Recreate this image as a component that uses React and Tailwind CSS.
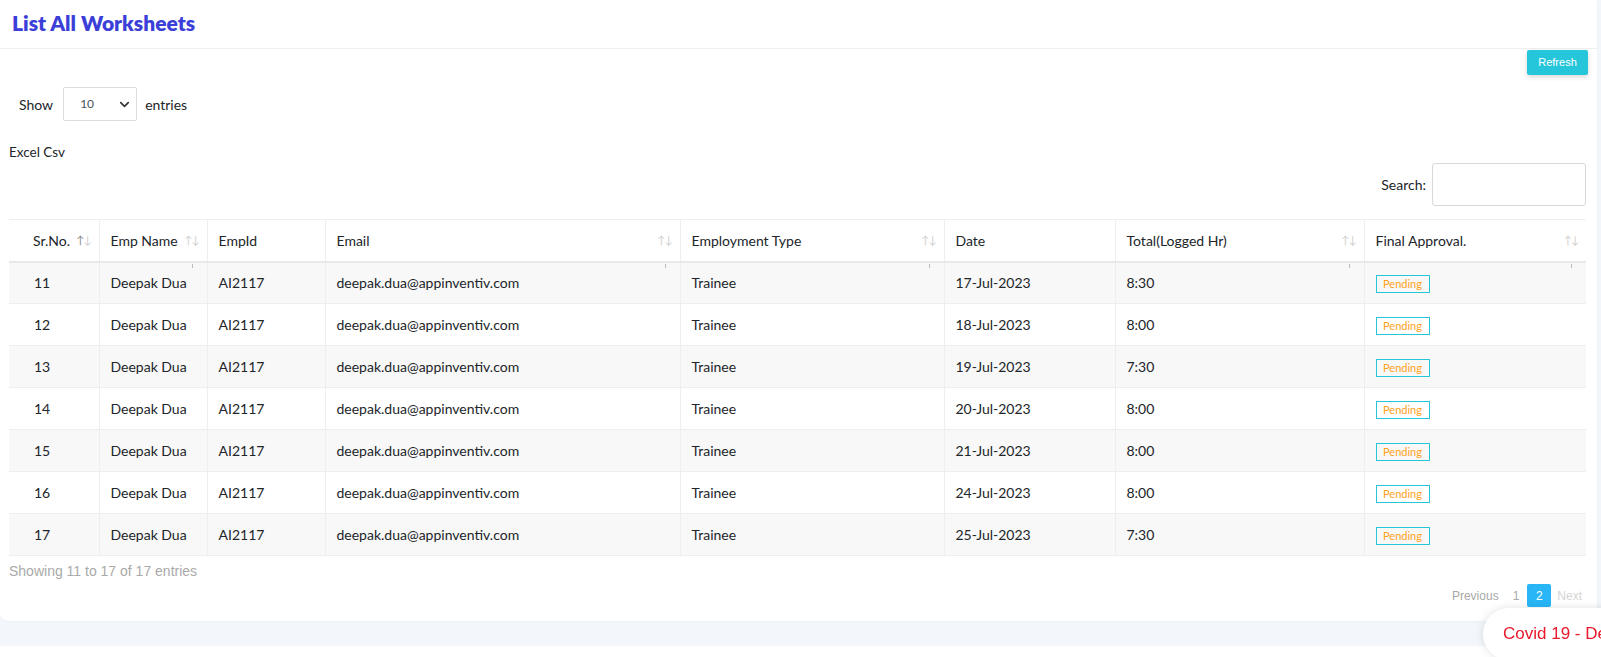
import { ChevronDown } from "lucide-react"

const rows = [
    { sr: 11, date: "17-Jul-2023", total: "8:30" },
    { sr: 12, date: "18-Jul-2023", total: "8:00" },
    { sr: 13, date: "19-Jul-2023", total: "7:30" },
    { sr: 14, date: "20-Jul-2023", total: "8:00" },
    { sr: 15, date: "21-Jul-2023", total: "8:00" },
    { sr: 16, date: "24-Jul-2023", total: "8:00" },
    { sr: 17, date: "25-Jul-2023", total: "7:30" },
]

const cols = [
    { label: "Sr.No.", w: "w-[90px]", sort: true, first: true },
    { label: "Emp Name", w: "w-[108px]", sort: true, tick: true },
    { label: "EmpId", w: "w-[118px]" },
    { label: "Email", w: "w-[355px]", sort: true, tick: true },
    { label: "Employment Type", w: "w-[264px]", sort: true, tick: true },
    { label: "Date", w: "w-[171px]" },
    { label: "Total(Logged Hr)", w: "w-[249px]", sort: true, tick: true },
    { label: "Final Approval.", w: "w-[222px]", sort: true, tick: true },
]

const SortIcon = ({ active }) => (
    <span className="absolute right-[8px] top-1/2 -translate-y-1/2 text-[11px] tracking-[-1px] text-[#cfcfcf]">
        <span className={active ? "text-[#8a8a8a]" : ""}>↑</span>↓
    </span>
)

const App = () => {
    return (
        <div className="min-h-screen bg-[#f3f6fa] font-['Lato',sans-serif] text-[#212529]">
            <div className="w-[1597px] bg-white rounded-b-lg shadow-[0_1px_3px_rgba(0,0,0,0.03)]">
                <header className="h-[49px] border-b border-[#f0f0f0] flex items-center pl-[12px] pb-[4px]">
                    <h1 className="text-[21px] font-extrabold text-[#3b3fd8] leading-none">List All Worksheets</h1>
                </header>

                <section className="pl-[9px] pr-[11px] pb-[14px]">
                    <div className="flex justify-end pt-[1px]">
                        <button className="h-[25px] w-[61px] mr-[-2px] rounded-[2px] bg-[#26c6da] text-white text-[11px] font-['Liberation_Sans',Arial,sans-serif] shadow-[0_2px_5px_rgba(0,0,0,0.16)]">
                            Refresh
                        </button>
                    </div>

                    <div className="mt-[12px] flex items-center pl-[10px] text-[14px]">
                        <span>Show</span>
                        <div className="ml-[10px] h-[34px] w-[74px] border border-[#dcdcdc] rounded-[2px] flex items-center justify-between pl-[16px] pr-[4px]">
                            <span className="text-[12px] text-[#495057]">10</span>
                            <ChevronDown size={15} strokeWidth={2.6} className="text-[#333]" />
                        </div>
                        <span className="ml-[8px]">entries</span>
                    </div>

                    <p className="mt-[23px] text-[13.5px] leading-[16px]">Excel Csv</p>

                    <div className="mt-[3px] flex justify-end items-center text-[14px]">
                        <label htmlFor="search">Search:</label>
                        <input id="search" className="ml-[6px] h-[43px] w-[154px] border border-[#d8d8d8] rounded-[3px] outline-none" />
                    </div>

                    <table className="mt-[13px] w-full table-fixed border-collapse text-[14px]">
                        <thead>
                            <tr className="h-[42px] border-t border-[#efefef] border-b-2 border-b-[#e9e9e9]">
                                {cols.map((c) => (
                                    <th
                                        key={c.label}
                                        className={`${c.w} relative text-left font-normal ${c.first ? "pl-[24px]" : "pl-[11px] border-l border-[#eeeeee]"}`}
                                    >
                                        {c.label}
                                        {c.sort && <SortIcon active={c.first} />}
                                        {c.tick && <span className="absolute right-[14px] bottom-[-7px] h-[4px] w-px bg-[#bbbbbb]"></span>}
                                    </th>
                                ))}
                            </tr>
                        </thead>
                        <tbody>
                            {rows.map((r, i) => (
                                <tr key={r.sr} className={`h-[42px] border-b border-[#eeeeee] ${i % 2 === 0 ? "bg-[#f8f8f8]" : "bg-white"}`}>
                                    <td className="pl-[25px]">{r.sr}</td>
                                    <td className="pl-[11px] border-l border-[#eeeeee]">Deepak Dua</td>
                                    <td className="pl-[11px] border-l border-[#eeeeee]">AI2117</td>
                                    <td className="pl-[11px] border-l border-[#eeeeee]">deepak.dua@appinventiv.com</td>
                                    <td className="pl-[11px] border-l border-[#eeeeee]">Trainee</td>
                                    <td className="pl-[11px] border-l border-[#eeeeee]">{r.date}</td>
                                    <td className="pl-[11px] border-l border-[#eeeeee]">{r.total}</td>
                                    <td className="pl-[11px] border-l border-[#eeeeee]">
                                        <span className="inline-block mt-[3px] h-[18px] w-[54px] border border-[#26c6da] text-center text-[11px] leading-[16px] text-[#ffa21a]">Pending</span>
                                    </td>
                                </tr>
                            ))}
                        </tbody>
                    </table>

                    <p className="mt-[7px] text-[14px] leading-[16px] text-[#a9a9a9] font-['Liberation_Sans',Arial,sans-serif]">Showing 11 to 17 of 17 entries</p>

                    <nav className="mt-[5px] flex justify-end items-center text-[12px] font-['Liberation_Sans',Arial,sans-serif] mr-[-2px]">
                        <span className="px-[6px] text-[#a9a9a9]">Previous</span>
                        <span className="px-[8px] text-[#a9a9a9]">1</span>
                        <span className="h-[23px] w-[24px] rounded-[2px] bg-[#29b6f6] text-white flex items-center justify-center">2</span>
                        <span className="px-[6px] text-[#d5d5d5]">Next</span>
                    </nav>
                </section>
            </div>

            <div className="h-[25px]"></div>
            <div className="h-[11px] bg-white"></div>

            <div className="fixed left-[1483px] top-[608px] h-[52px] w-[200px] rounded-l-full bg-white shadow-[0_0_10px_rgba(0,0,0,0.12)] flex items-center pl-[20px] overflow-hidden">
                <span className="whitespace-nowrap text-[17px] text-[#e8192c] font-['Liberation_Sans',Arial,sans-serif]">Covid 19 - Dedicated Helpline</span>
            </div>
        </div>
    )
}

export default App
